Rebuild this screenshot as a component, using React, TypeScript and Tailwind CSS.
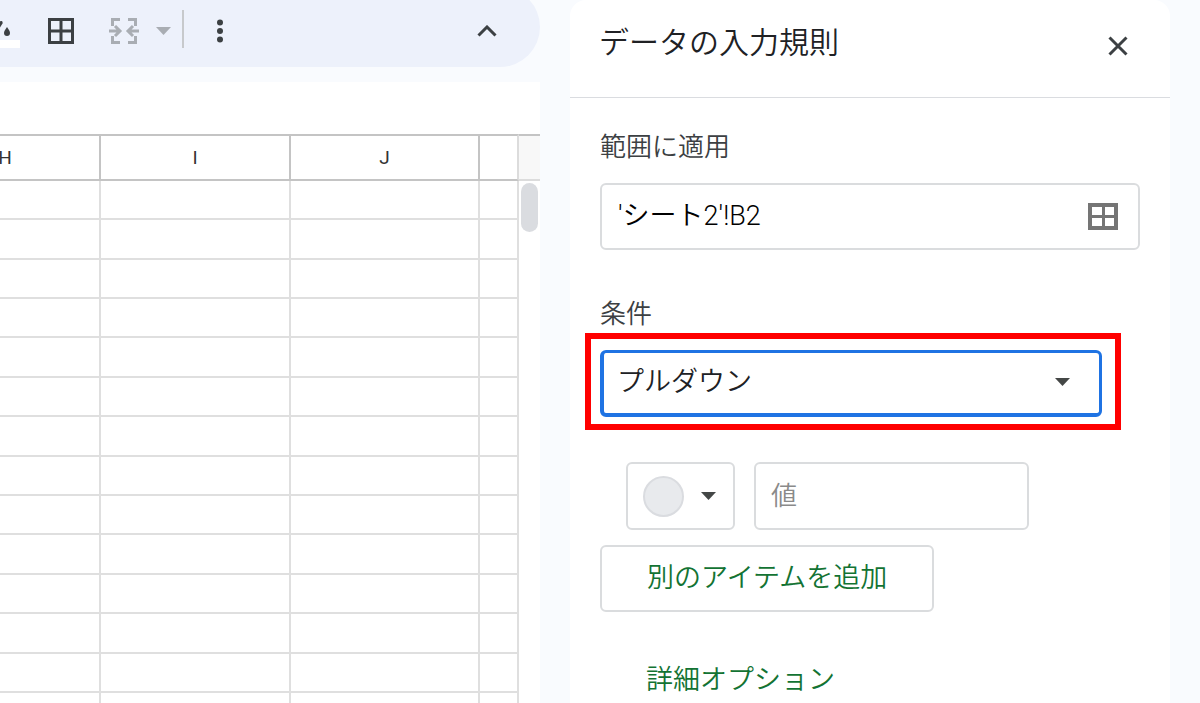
import { type ReactNode, useState } from "react";

const columns = ["H", "I", "J", ""];
const rows = Array.from({ length: 14 }, (_, i) => i + 1);

function Caret({ className }: { className?: string }) {
  return (
    <svg width="15" height="8" viewBox="0 0 15 8" fill="currentColor" className={className} aria-hidden="true">
      <path d="M0 0h15L7.5 8z" />
    </svg>
  );
}

function ToolButton({ label, className, children }: { label: string; className: string; children: ReactNode }) {
  return (
    <button type="button" aria-label={label} className={`flex shrink-0 items-center justify-center ${className}`}>
      {children}
    </button>
  );
}

function Toolbar() {
  return (
    <div className="-mt-[13px] flex h-20 shrink-0 items-center rounded-r-full bg-[#edf1fb] pt-2 text-[#3c4043]">
      <ToolButton label="塗りつぶしの色" className="mb-[19px] h-9 w-5 self-end">
        <svg width="20" height="36" viewBox="0 0 20 36" aria-hidden="true">
          <path d="M0 9.500c2-1 3 0 2.500 2L0 15.500z" fill="currentColor" />
          <path d="M7 15c2 3 3 4 3 6a3 3 0 0 1-6 0c0-2 1-3 3-6z" fill="currentColor" />
          <path d="M0 28h20v8H0z" fill="#fff" />
        </svg>
      </ToolButton>
      <ToolButton label="枠線" className="ml-7 h-8 w-[26px]">
        <svg width="26" height="26" viewBox="0 0 26 26" fill="none" stroke="currentColor" strokeWidth="3" aria-hidden="true">
          <path d="M1.500 1.500h23v23h-23zM13 1.500v23M1.500 13h23" />
        </svg>
      </ToolButton>
      <ToolButton label="セルを結合" className="ml-[35px] h-8 w-[30px] text-[#a9adb3]">
        <svg width="30" height="26" viewBox="0 0 30 26" fill="none" stroke="currentColor" strokeWidth="3" aria-hidden="true">
          <path d="M3.500 8V1.500H11M19 1.500h7.500V8M3.500 18v6.500H11M19 24.500h7.500V18" />
          <path d="M0 13h11M6 8l5 5-5 5M30 13H19M24 8l-5 5 5 5" />
        </svg>
      </ToolButton>
      <ToolButton label="結合の種類を選択" className="ml-[17px] h-8 w-[15px] text-[#a9adb3]">
        <Caret />
      </ToolButton>
      <div className="mb-[19px] ml-[11px] h-[38px] w-[2px] shrink-0 self-end bg-[#c7c9cc]" />
      <ToolButton label="その他" className="ml-[26px] h-8 w-5">
        <svg width="6" height="24" viewBox="0 0 6 24" fill="currentColor" aria-hidden="true">
          <circle cx="3" cy="3.500" r="3" />
          <circle cx="3" cy="12" r="3" />
          <circle cx="3" cy="20.500" r="3" />
        </svg>
      </ToolButton>
      <ToolButton label="メニューを非表示" className="ml-auto mr-[38px] h-8 w-[30px]">
        <svg width="20" height="12" viewBox="0 0 20 12" fill="none" stroke="currentColor" strokeWidth="3" aria-hidden="true">
          <path d="M1.500 10.500L10 2l8.500 8.500" />
        </svg>
      </ToolButton>
    </div>
  );
}

function Sheet() {
  return (
    <div className="flex min-h-0 flex-1 items-start justify-end overflow-hidden bg-white">
      <table className="w-[608px] shrink-0 table-fixed border-separate border-spacing-0">
        <colgroup>
          <col className="w-[190px]" />
          <col className="w-[190px]" />
          <col className="w-[189px]" />
          <col className="w-[39px]" />
        </colgroup>
        <thead>
          <tr>
            {columns.map((name) => (
              <th
                key={name}
                scope="col"
                className="h-[47px] border-y-2 border-r-2 border-[#c4c4c4] p-0 text-[19px] leading-5 font-normal text-[#333] last:border-r-[#dcdcdc]"
              >
                {name}
              </th>
            ))}
          </tr>
        </thead>
        <tbody>
          {rows.map((row) => (
            <tr key={row} className="h-[39px] nth-[5n+2]:h-10 nth-[5n+5]:h-10">
              {columns.map((name) => (
                <td key={name} className="border-r-2 border-b-2 border-[#dfdfdf] p-0" />
              ))}
            </tr>
          ))}
        </tbody>
      </table>
      <div className="flex w-[21px] shrink-0 flex-col">
        <div className="h-[47px] border-t-2 border-b-2 border-t-[#c4c4c4] border-b-[#dcdcdc] bg-[#f8f8f8]" />
        <div className="mx-[2px] mt-[2px] h-[49px] rounded-full bg-[#dadce0]" />
      </div>
    </div>
  );
}

export default function App() {
  const [range, setRange] = useState("'シート2'!B2");
  const [condition, setCondition] = useState("dropdown");
  const [value, setValue] = useState("");

  return (
    <div className="flex h-screen overflow-hidden bg-[#f9fbfe] font-['Roboto','Noto_Sans_CJK_JP',sans-serif]">
      <main className="flex min-w-0 flex-1 flex-col overflow-hidden">
        <Toolbar />
        <div className="mt-[15px] h-[52px] shrink-0 bg-white" />
        <Sheet />
      </main>

      <aside className="mx-[30px] w-[600px] shrink-0 overflow-hidden rounded-t-2xl bg-white">
        <header className="flex h-[98px] items-start justify-between border-b border-[#dadce0] pt-[22px] pr-10 pl-[29px]">
          <h1 className="text-[30px] leading-[42px] font-[350] text-[#202124]">データの入力規則</h1>
          <button type="button" aria-label="閉じる" className="mt-2 flex h-8 w-6 items-center justify-center text-[#3c4043]">
            <svg width="20" height="20" viewBox="0 0 20 20" fill="none" stroke="currentColor" strokeWidth="3" aria-hidden="true">
              <path d="M1.500 1.500l17 17M18.500 1.500l-17 17" />
            </svg>
          </button>
        </header>

        <form className="flex flex-col items-start px-[30px] pt-[31px]" onSubmit={(e) => e.preventDefault()}>
          <label htmlFor="range" className="text-[26px] leading-9 font-[350] text-[#3c4043]">
            範囲に適用
          </label>
          <div className="mt-[18px] flex h-[67px] w-full items-center rounded-md border-2 border-[#dadcde] pr-5 pl-4">
            <input
              id="range"
              type="text"
              value={range}
              onChange={(e) => setRange(e.target.value)}
              className="min-w-0 flex-1 text-[27px] font-[350] text-black outline-none"
            />
            <button type="button" aria-label="データ範囲を選択" className="text-[#757575]">
              <svg width="30" height="27" viewBox="0 0 30 27" fill="none" stroke="currentColor" strokeWidth="3" aria-hidden="true">
                <path d="M2 2h26v23H2z" strokeWidth="4" />
                <path d="M15.500 2v23M2 13.500h26" />
              </svg>
            </button>
          </div>

          <label htmlFor="condition" className="mt-[46px] text-[26px] leading-9 font-[350] text-[#3c4043]">
            条件
          </label>
          <div className="mt-px -ml-[15px] w-[536px] border-[6px] border-[#ff0000] pt-[11px] pr-[13px] pb-[7px] pl-[9px]">
            <div className="relative">
              <select
                id="condition"
                value={condition}
                onChange={(e) => setCondition(e.target.value)}
                className="block h-[67px] w-full appearance-none rounded-md border-[3px] border-b-4 border-l-4 border-[#1f73e3] bg-white pr-12 pb-px pl-[13px] text-[27px] font-[350] text-[#202124] outline-none"
              >
                <option value="dropdown">プルダウン</option>
              </select>
              <Caret className="pointer-events-none absolute top-7 right-8 text-[#444746]" />
            </div>
          </div>

          <div className="mt-8 ml-[26px] flex gap-[19px]">
            <button
              type="button"
              aria-label="色を選択"
              className="flex h-[68px] w-[109px] items-center gap-[17px] rounded-md border-2 border-[#dadcde] pl-[15px] text-[#444746]"
            >
              <span className="size-[41px] rounded-full border-2 border-[#dadce0] bg-[#e8eaed]" />
              <Caret />
            </button>
            <input
              type="text"
              aria-label="値"
              placeholder="値"
              value={value}
              onChange={(e) => setValue(e.target.value)}
              className="h-[68px] w-[275px] rounded-md border-2 border-[#dadcde] px-[15px] text-[26px] font-[350] outline-none placeholder:text-[#8a8a8a]"
            />
          </div>

          <button
            type="button"
            className="mt-[15px] h-[67px] rounded-md border-2 border-[#dadcde] px-[45px] text-[27px] font-[350] whitespace-nowrap text-[#137333]"
          >
            別のアイテムを追加
          </button>
          <button type="button" className="mt-[50px] ml-[46px] text-[27px] leading-9 font-[350] text-[#137333]">
            詳細オプション
          </button>
        </form>
      </aside>
    </div>
  );
}
